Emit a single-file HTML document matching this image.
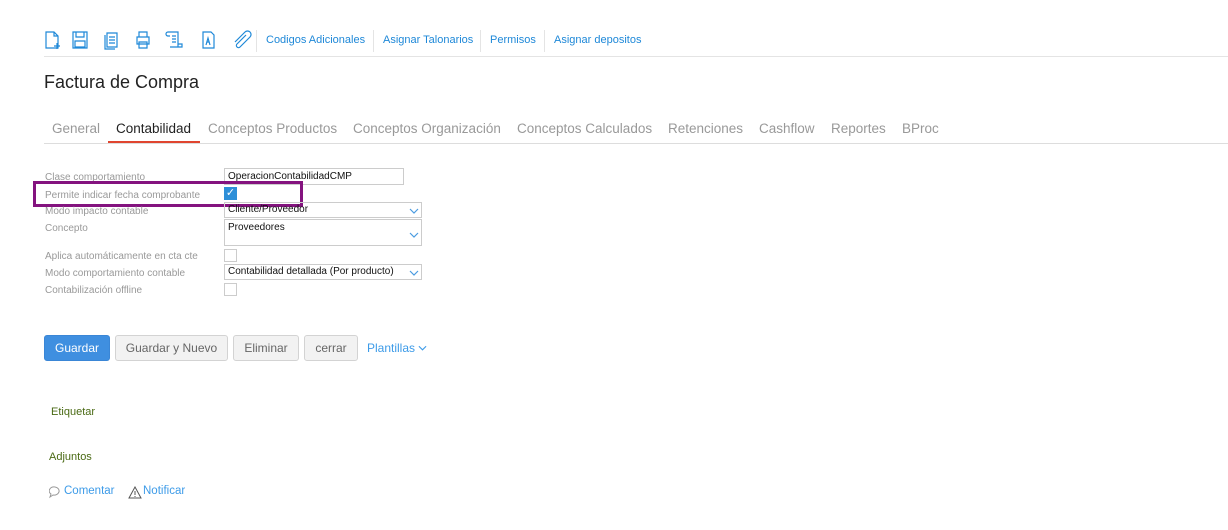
<!DOCTYPE html>
<html><head><style>
body{margin:0;width:1228px;height:530px;background:#fff;font-family:"Liberation Sans",sans-serif;position:relative;overflow:hidden}
.a{position:absolute}
.tb{color:#1e88d8;font-size:11px}
.sep{position:absolute;top:30px;width:1px;height:22px;background:#e4e4e4}
.lbl{position:absolute;left:45px;font-size:10px;color:#999}
.in{position:absolute;left:224px;border:1px solid #ccc;font-size:10px;color:#111;box-sizing:border-box;padding-left:3px}
.cb{position:absolute;left:224px;width:13px;height:13px;border:1px solid #ccc;box-sizing:border-box}
.tab{position:absolute;top:121px;font-size:13.5px;color:#999}
.btn{position:absolute;top:335px;height:26px;border:1px solid #d3d3d3;border-radius:3px;background:#f2f2f2;color:#666;font-size:12px;line-height:25px;text-align:center;box-sizing:border-box}
svg{position:absolute}
.ch{position:absolute;right:2px;width:10px;height:6px}
</style></head><body>
<svg style="left:44px;top:30px" width="210" height="20" fill="none" stroke="#1e88d8" stroke-width="1.2">
<path d="M2 2h8l4 4v12H2z M10 2v4h4 M13 13v6 M10 16h6"/>
<path d="M29 2h14v16H29z M32 2v5h8V2 M31 11h10v6H31z"/>
<path d="M63 3h10v14H63z M61 5v14h10 M65 7h6 M65 10h6 M65 13h6"/>
<path d="M95 2h8v5h-8z M93 7h12v7H93z M95 12h8v6h-8z"/>
<path d="M124 2h10v15h-8 M124 2a2 2 0 0 0 0 4h2 M128 6h4 M128 9h4 M128 12h4 M134 14h4v3h-4"/>
<path d="M159 2h8l3 3v13h-11z M162 15l2-7 2 7 M163 12h2"/>
<path d="M202 5l-9 9a2 2 0 0 0 3 3l10-10a3.5 3.5 0 0 0-5-5l-10 10"/>
</svg>
<div class="sep" style="left:256px"></div>
<div class="a tb" style="left:266px;top:34px">Codigos Adicionales</div>
<div class="sep" style="left:373px"></div>
<div class="a tb" style="left:383px;top:34px">Asignar Talonarios</div>
<div class="sep" style="left:480px"></div>
<div class="a tb" style="left:490px;top:34px">Permisos</div>
<div class="sep" style="left:544px"></div>
<div class="a tb" style="left:554px;top:34px">Asignar depositos</div>
<div class="a" style="left:44px;top:56px;width:1184px;height:1px;background:#e4e4e4"></div>
<div class="a" style="left:44px;top:72px;font-size:18px;color:#222">Factura de Compra</div>
<div class="tab" style="left:52px">General</div>
<div class="tab" style="left:116px;color:#222">Contabilidad</div>
<div class="a" style="left:108px;top:141px;width:92px;height:2px;background:#e0452f"></div>
<div class="tab" style="left:208px">Conceptos Productos</div>
<div class="tab" style="left:353px">Conceptos Organización</div>
<div class="tab" style="left:517px">Conceptos Calculados</div>
<div class="tab" style="left:668px">Retenciones</div>
<div class="tab" style="left:759px">Cashflow</div>
<div class="tab" style="left:831px">Reportes</div>
<div class="tab" style="left:902px">BProc</div>
<div class="a" style="left:44px;top:143px;width:1184px;height:1px;background:#ddd"></div>

<div class="lbl" style="top:172px">Clase comportamiento</div>
<div class="in" style="top:168px;width:180px;height:17px;line-height:15px">OperacionContabilidadCMP</div>
<div class="lbl" style="top:190px">Permite indicar fecha comprobante</div>
<div class="a" style="left:224px;top:187px;width:13px;height:13px;background:#2d8fd8;color:#fff;font-size:11px;line-height:13px;text-align:center">✓</div>
<div class="a" style="left:33px;top:181px;width:264px;height:20px;border:3px solid #84137f"></div>
<div class="lbl" style="top:206px">Modo impacto contable</div>
<div class="in" style="top:202px;width:198px;height:16px;line-height:14px">Cliente/Proveedor<svg class="ch" style="top:5px" viewBox="0 0 10 6"><path d="M1 1l4 4 4-4" fill="none" stroke="#4a9be0" stroke-width="1.2"/></svg></div>
<div class="lbl" style="top:223px">Concepto</div>
<div class="in" style="top:219px;width:198px;height:27px;line-height:15px">Proveedores<svg class="ch" style="top:12px" viewBox="0 0 10 6"><path d="M1 1l4 4 4-4" fill="none" stroke="#4a9be0" stroke-width="1.2"/></svg></div>
<div class="lbl" style="top:251px">Aplica automáticamente en cta cte</div>
<div class="cb" style="top:249px"></div>
<div class="lbl" style="top:268px">Modo comportamiento contable</div>
<div class="in" style="top:264px;width:198px;height:16px;line-height:14px">Contabilidad detallada (Por producto)<svg class="ch" style="top:5px" viewBox="0 0 10 6"><path d="M1 1l4 4 4-4" fill="none" stroke="#4a9be0" stroke-width="1.2"/></svg></div>
<div class="lbl" style="top:285px">Contabilización offline</div>
<div class="cb" style="top:283px"></div>

<div class="btn" style="left:44px;width:66px;background:#3f8fe0;border-color:#3a86d6;color:#fff">Guardar</div>
<div class="btn" style="left:115px;width:113px">Guardar y Nuevo</div>
<div class="btn" style="left:233px;width:66px">Eliminar</div>
<div class="btn" style="left:304px;width:54px">cerrar</div>
<div class="a" style="left:367px;top:341px;font-size:12px;color:#3d9be8">Plantillas</div>
<svg style="left:418px;top:345px" width="9" height="6" viewBox="0 0 10 6"><path d="M1 1l4 4 4-4" fill="none" stroke="#3d9be8" stroke-width="1.2"/></svg>
<div class="a" style="left:51px;top:406px;font-size:11px;color:#4a6a14">Etiquetar</div>
<div class="a" style="left:49px;top:451px;font-size:11px;color:#4a6a14">Adjuntos</div>
<svg style="left:49px;top:486px" width="100" height="14" fill="none" stroke="#999" stroke-width="1"><path d="M6 1a5 4 0 1 1-2 8l-3 2 1-3a5 4 0 0 1 4-7z"/><path d="M86 1l6 11H80z M86 5v4 M86 10v1" stroke="#555"/></svg>
<div class="a" style="left:64px;top:485px;font-size:11.5px;color:#3d9be8">Comentar</div>
<div class="a" style="left:143px;top:485px;font-size:11.5px;color:#3d9be8">Notificar</div>
</body></html>
